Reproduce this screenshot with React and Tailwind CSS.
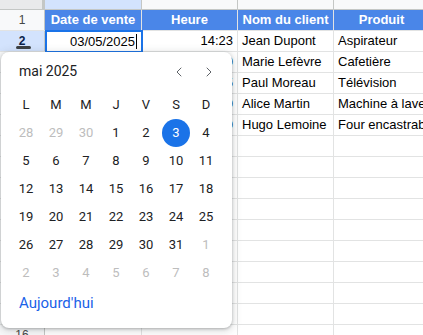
import React from "react";
import { ChevronLeft, ChevronRight } from "lucide-react";

const rows = [
  { t: "14:23", n: "Jean Dupont", p: "Aspirateur" },
  { t: "09:10", n: "Marie Lefèvre", p: "Cafetière" },
  { t: "16:45", n: "Paul Moreau", p: "Télévision" },
  { t: "11:30", n: "Alice Martin", p: "Machine à laver" },
  { t: "15:00", n: "Hugo Lemoine", p: "Four encastrable" },
];

const weeks = [
  [[28, 0], [29, 0], [30, 0], [1, 1], [2, 1], [3, 2], [4, 1]],
  [[5, 1], [6, 1], [7, 1], [8, 1], [9, 1], [10, 1], [11, 1]],
  [[12, 1], [13, 1], [14, 1], [15, 1], [16, 1], [17, 1], [18, 1]],
  [[19, 1], [20, 1], [21, 1], [22, 1], [23, 1], [24, 1], [25, 1]],
  [[26, 1], [27, 1], [28, 1], [29, 1], [30, 1], [31, 1], [1, 0]],
  [[2, 0], [3, 0], [4, 0], [5, 0], [6, 0], [7, 0], [8, 0]],
];

function Cell({ w, className = "", children }) {
  return (
    <div
      className={`shrink-0 h-full border-r border-[#e2e3e3] overflow-hidden whitespace-nowrap flex items-center px-[4px] ${w} ${className}`}
    >
      {children}
    </div>
  );
}

export default function App() {
  const allRows = [];
  for (let i = 1; i <= 16; i++) allRows.push(i);

  return (
    <div
      className="relative w-[423px] h-[335px] overflow-hidden bg-white text-[13px] text-[#000]"
      style={{ fontFamily: '"Liberation Sans", Arial, sans-serif' }}
    >
      {/* column header row (mostly scrolled out of view) */}
      <div className="flex h-[10px] border-b border-[#c4c7c5]">
        <div className="w-[45px] shrink-0 h-full bg-[#e9eaeb] border-r-[3px] border-[#c4c7c5]" />
        <div className="w-[97px] shrink-0 h-full bg-[#d3e3fd] border-r border-[#c4c7c5] flex items-end justify-center overflow-hidden">
          <span className="text-[11px] leading-none mb-[8px] text-[#444]">A</span>
        </div>
        <div className="w-[96px] shrink-0 h-full bg-[#f8f9fa] border-r border-[#c4c7c5] flex items-end justify-center overflow-hidden">
          <span className="text-[11px] leading-none mb-[8px] text-[#444]">B</span>
        </div>
        <div className="w-[96px] shrink-0 h-full bg-[#f8f9fa] border-r border-[#c4c7c5] flex items-end justify-center overflow-hidden">
          <span className="text-[11px] leading-none mb-[8px] text-[#444]">C</span>
        </div>
        <div className="w-[96px] shrink-0 h-full bg-[#f8f9fa] border-r border-[#c4c7c5] flex items-end justify-center overflow-hidden">
          <span className="text-[11px] leading-none mb-[8px] text-[#444]">D</span>
        </div>
      </div>

      {allRows.map((i) => {
        const isHeader = i === 1;
        const data = i >= 2 && i <= 6 ? rows[i - 2] : null;
        const showNum = i === 1 || i === 2 || i === 16;
        return (
          <div key={i} className="flex h-[21px] border-b border-[#e2e3e3]">
            <div
              className={`relative w-[45px] shrink-0 h-full border-r border-[#c4c7c5] flex items-center justify-center text-[12px] ${
                i === 2 ? "bg-[#d3e3fd] font-bold text-[#0b1f4a]" : "bg-[#f8f9fa] text-[#444746]"
              }`}
            >
              {showNum ? i : ""}
              {i === 2 && (
                <div className="absolute left-[16px] bottom-[2px] w-[15px] h-[3px] rounded-full bg-[#3c4043]" />
              )}
            </div>
            {isHeader ? (
              <>
                <Cell w="w-[97px]" className="bg-[#4a86e8] border-[#7aa6f0] justify-center text-white font-bold">
                  Date de vente
                </Cell>
                <Cell w="w-[96px]" className="bg-[#4a86e8] border-[#7aa6f0] justify-center text-white font-bold">
                  Heure
                </Cell>
                <Cell w="w-[96px]" className="bg-[#4a86e8] border-[#7aa6f0] justify-center text-white font-bold">
                  Nom du client
                </Cell>
                <Cell w="w-[96px]" className="bg-[#4a86e8] border-[#7aa6f0] justify-center text-white font-bold">
                  Produit
                </Cell>
              </>
            ) : (
              <>
                <Cell w="w-[97px]" className="justify-end" />
                <Cell w="w-[96px]" className="justify-end">
                  {data ? data.t : ""}
                </Cell>
                <Cell w="w-[96px]">{data ? data.n : ""}</Cell>
                <Cell w="w-[96px]">{data ? data.p : ""}</Cell>
              </>
            )}
          </div>
        );
      })}

      {/* active cell editor */}
      <div className="absolute left-[45px] top-[30px] w-[98px] h-[23px] border-2 border-[#1a73e8] bg-white flex items-center justify-end pr-[4px]">
        <span>03/05/2025</span>
        <span className="inline-block w-px h-[15px] bg-black ml-[1px]" />
      </div>

      {/* date picker popup */}
      <div
        className="absolute left-[1px] top-[52px] w-[231px] h-[276px] bg-white rounded-lg shadow-[0_1px_3px_rgba(60,64,67,0.35),0_2px_8px_2px_rgba(60,64,67,0.15)] px-[10px]"
        style={{ fontFamily: "Roboto, Arial, sans-serif" }}
      >
        <div className="h-[39px] flex items-center justify-between pl-[8px] pr-[1px]">
          <span className="text-[14px] text-[#202124]">mai 2025</span>
          <div className="flex items-center gap-[14px] mr-[4px]">
            <ChevronLeft size={16} strokeWidth={1.5} color="#5f6368" />
            <ChevronRight size={16} strokeWidth={1.5} color="#5f6368" />
          </div>
        </div>
        <div className="grid grid-cols-[repeat(7,30px)] h-[28px] items-center text-[13px] text-[#202124]">
          {["L", "M", "M", "J", "V", "S", "D"].map((d, k) => (
            <div key={k} className="text-center">
              {d}
            </div>
          ))}
        </div>
        {weeks.map((wk, r) => (
          <div key={r} className="grid grid-cols-[repeat(7,30px)] h-[28px] items-center text-[13px]">
            {wk.map(([d, s], k) => (
              <div key={k} className="flex items-center justify-center">
                {s === 2 ? (
                  <div className="w-[28px] h-[28px] rounded-full bg-[#1a73e8] text-white flex items-center justify-center">
                    {d}
                  </div>
                ) : (
                  <span className={s === 1 ? "text-[#202124]" : "text-[#bdbdbd]"}>{d}</span>
                )}
              </div>
            ))}
          </div>
        ))}
        <div className="h-[32px] flex items-center pl-[8px] text-[15px] text-[#1a62e8]">Aujourd'hui</div>
      </div>
    </div>
  );
}
